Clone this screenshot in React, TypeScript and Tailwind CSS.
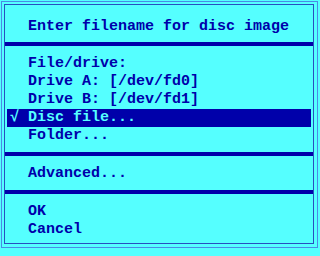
import React from 'react'

const rows = [
  { label: 'File/drive:', checked: false, selected: false },
  { label: 'Drive A: [/dev/fd0]', checked: false, selected: false },
  { label: 'Drive B: [/dev/fd1]', checked: false, selected: false },
  { label: 'Disc file...', checked: true, selected: true },
  { label: 'Folder...', checked: false, selected: false },
]

const Row: React.FC<{ label: string; checked?: boolean; selected?: boolean }> = ({ label, checked, selected }) => (
  <div className={`mx-[2px] pl-[3px] h-[18px] leading-[18px] flex whitespace-pre ${selected ? 'bg-[#0000aa] text-[#55ffff]' : 'text-[#0000aa]'}`}>
    <span className="w-[18px] shrink-0">{checked ? '√' : ''}</span>
    <span>{label}</span>
  </div>
)

const Sep = () => <div className="h-[4px] bg-[#0000aa]" />

export default function App() {
  return (
    <div className="w-[320px] h-[256px] bg-[#55ffff] pt-[1px] pl-[1px] text-[15px] font-bold" style={{ fontFamily: '"Liberation Mono", "DejaVu Sans Mono", monospace' }}>
      <div className="w-[317px] h-[247px] border border-[#4a8ae6] pl-[2px] pt-[2px] pr-[3px] pb-[3px]">
        <div className="h-full border border-[#2850c0] flex flex-col">
          <div className="pt-[13px] pb-[6px] pl-[23px] h-[37px] leading-[18px] text-[#0000aa] whitespace-pre">Enter filename for disc image</div>
          <Sep />
          <div className="pt-[9px] pb-[7px]">
            {rows.map(r => <Row key={r.label} {...r} />)}
          </div>
          <Sep />
          <div className="pt-[9px] pb-[7px]">
            <Row label="Advanced..." />
          </div>
          <Sep />
          <div className="pt-[9px]">
            <Row label="OK" />
            <Row label="Cancel" />
          </div>
        </div>
      </div>
    </div>
  )
}
